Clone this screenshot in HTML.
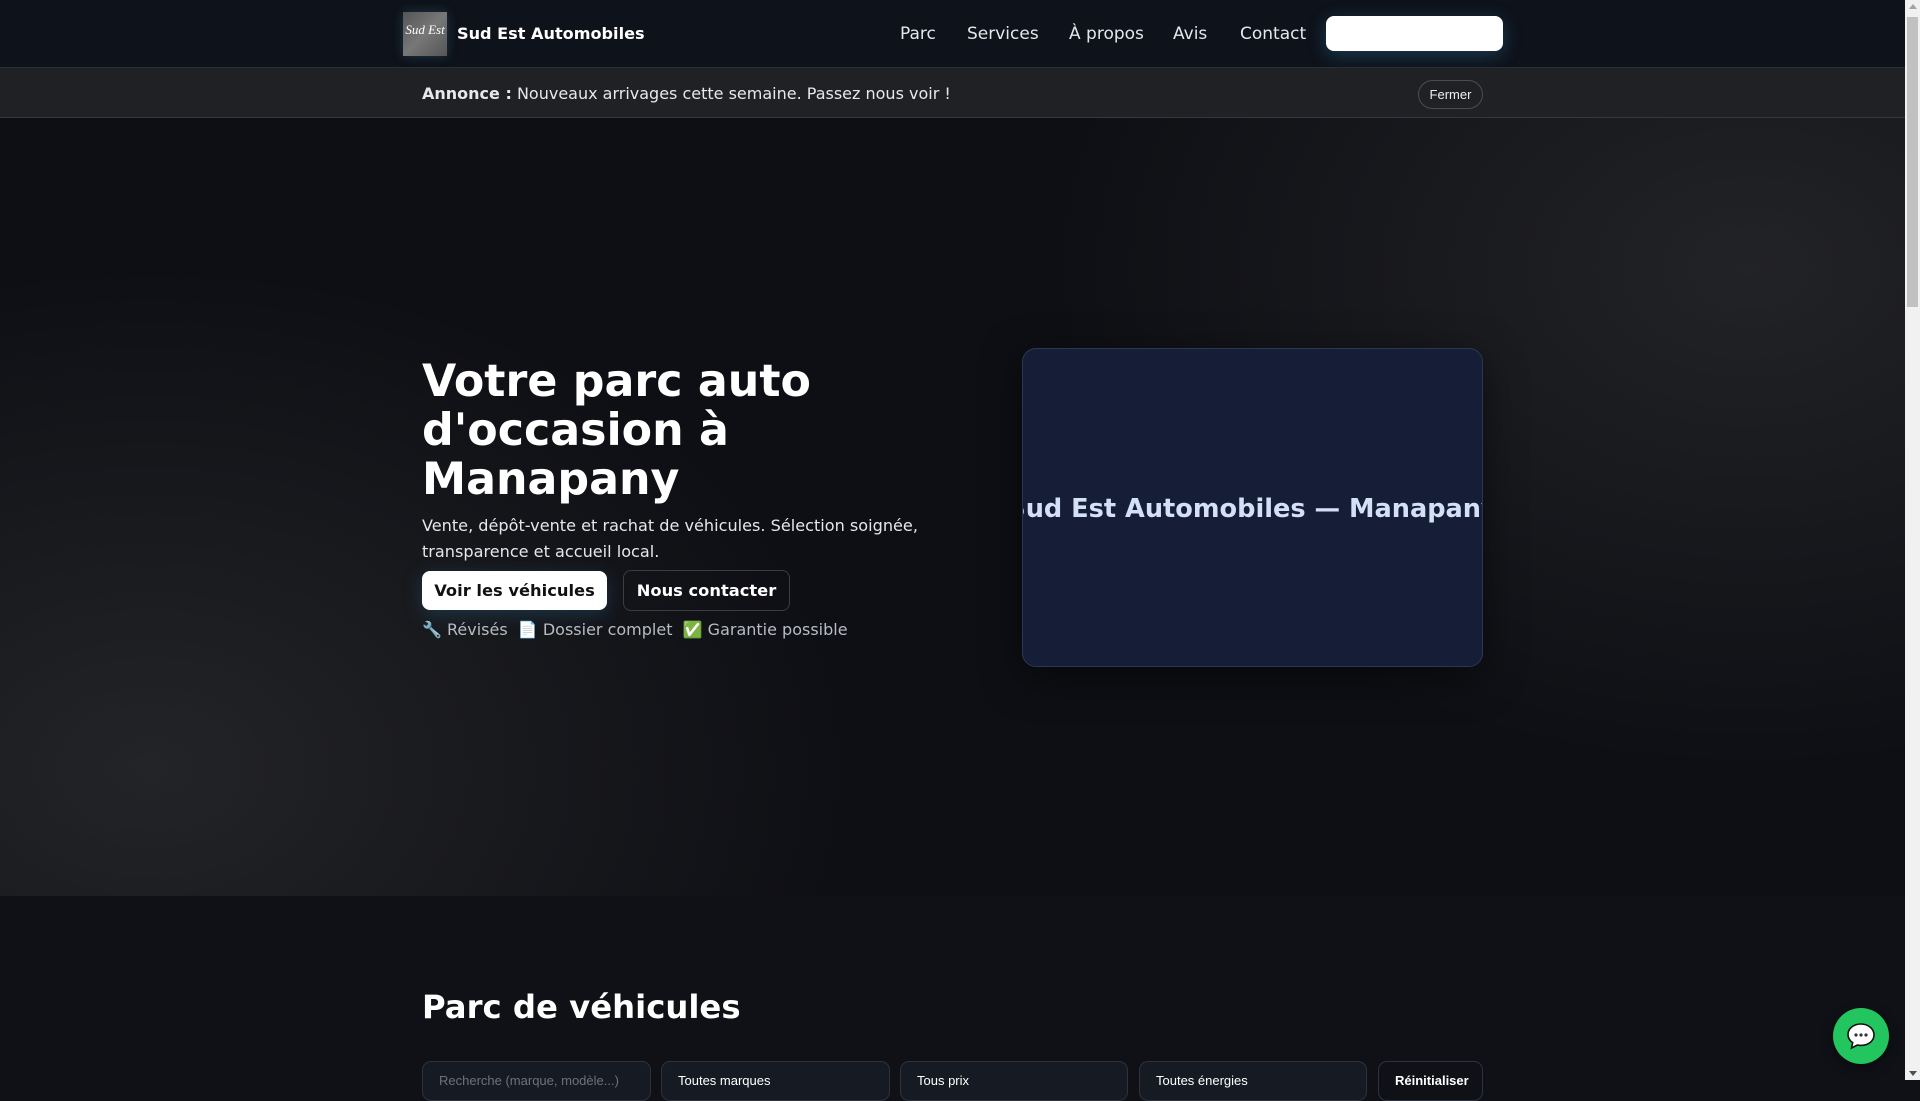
<!DOCTYPE html>
<html><head><meta charset="utf-8"><style>
*{box-sizing:border-box;margin:0;padding:0}
html,body{width:1920px;height:1080px;overflow:hidden;background:#0f1116;font-family:"DejaVu Sans","Liberation Sans",sans-serif;color:#fff}
.sb{position:absolute;right:0;top:0;width:15px;height:1080px;background:#f1f1f1}
.sb .th{position:absolute;left:2px;right:2px;top:17px;height:290px;background:#c1c1c1}
.sb .up{position:absolute;top:4px;left:4px;border:4px solid transparent;border-bottom:5px solid #a3a3a3;border-top:0}
.sb .dn{position:absolute;bottom:4px;left:4px;border:4px solid transparent;border-top:5px solid #505050;border-bottom:0}
.page{position:absolute;left:0;top:0;width:1905px;height:1080px}
nav{height:67px;background:#0e121a;position:relative}
.logo{position:absolute;left:403px;top:12px;width:44px;height:44px;background:linear-gradient(135deg,#555,#777 50%,#555);box-shadow:0 0 10px rgba(60,130,160,.35);color:#fff;font-family:"Liberation Serif",serif;font-style:italic;font-size:13px;text-align:center;line-height:36px}
.title{position:absolute;left:457px;top:24px;font-weight:bold;font-size:16.1px}
.links a{position:absolute;top:24px;font-size:17px;color:#e5e7eb;text-decoration:none}
.wbtn{position:absolute;left:1326px;top:16px;width:177px;height:35px;background:#fff;border-radius:8px;box-shadow:0 4px 18px rgba(40,110,150,.45)}
.ann{height:51px;background:#202125;border-top:1px solid #2b2e33;border-bottom:1px solid #34373c;position:relative}
.ann p{position:absolute;left:422px;top:16px;font-size:16px;color:#e8e8e8}
.ferm{position:absolute;left:1418px;top:12px;width:65px;height:29px;border:1px solid #4a4c52;border-radius:15px;font-family:"Liberation Sans",sans-serif;font-size:13px;text-align:center;line-height:27px;color:#eee}
.hero{position:absolute;top:118px;left:0;width:1905px;height:778px;background:radial-gradient(ellipse 700px 500px at 150px 650px,#232427,transparent),radial-gradient(ellipse 700px 500px at 1750px 150px,#222326,transparent),#0e0f14}
h1{position:absolute;left:422px;top:239px;font-size:44.3px;line-height:49px;font-weight:bold}
.para{position:absolute;left:422px;top:395px;font-size:16.1px;line-height:26px;color:#e5e7eb;width:540px}
.b1{position:absolute;left:422px;top:453px;width:185px;height:39px;background:#fff;color:#111;border-radius:8px;font-weight:bold;font-size:16.3px;text-align:center;line-height:39px;box-shadow:0 4px 18px rgba(40,110,150,.35)}
.b2{position:absolute;left:623px;top:452px;width:167px;height:41px;border:1px solid #3a3d44;color:#fff;border-radius:8px;font-weight:bold;font-size:16.3px;text-align:center;line-height:39px}
.badges{position:absolute;left:422px;top:502px;font-size:16px;color:#b8bcc4}
.card{position:absolute;left:1022px;top:230px;width:461px;height:319px;background:#151e36;border:1px solid #2c3852;border-radius:14px;overflow:hidden;box-shadow:0 10px 40px rgba(0,0,0,.5)}
.card span{position:absolute;left:50%;transform:translateX(-50%);top:145px;white-space:nowrap;font-weight:bold;font-size:25.6px;color:#d4e0f5}
h2{position:absolute;left:422px;top:988px;font-size:32.3px;font-weight:bold}
.f{position:absolute;top:1061px;height:40px;background:#161a22;border:1px solid #2d323c;border-radius:9px;font-family:"Liberation Sans",sans-serif;font-size:13px;color:#fff;padding:11px 16px}
.chat{position:absolute;left:1833px;top:1008px;width:56px;height:56px;border-radius:50%;background:#22c55e;box-shadow:0 4px 12px rgba(0,0,0,.4)}
</style></head><body>
<div class="page">
<nav>
<div class="logo">Sud Est</div>
<div class="title">Sud Est Automobiles</div>
<div class="links"><a style="left:900px">Parc</a><a style="left:967px">Services</a><a style="left:1069px">À propos</a><a style="left:1173px">Avis</a><a style="left:1240px">Contact</a></div>
<div class="wbtn"></div>
</nav>
<div class="ann"><p><b>Annonce :</b> Nouveaux arrivages cette semaine. Passez nous voir !</p><div class="ferm">Fermer</div></div>
<div class="hero">
<h1>Votre parc auto<br>d'occasion à<br>Manapany</h1>
<div class="para">Vente, dépôt-vente et rachat de véhicules. Sélection soignée, transparence et accueil local.</div>
<div class="b1">Voir les véhicules</div>
<div class="b2">Nous contacter</div>
<div class="badges">🔧 Révisés &nbsp;📄 Dossier complet &nbsp;✅ Garantie possible</div>
<div class="card"><span>Sud Est Automobiles — Manapany</span></div>
</div>
<h2>Parc de véhicules</h2>
<div class="f" style="left:422px;width:229px;color:#6b7280">Recherche (marque, modèle...)</div>
<div class="f" style="left:661px;width:229px">Toutes marques</div>
<div class="f" style="left:900px;width:228px">Tous prix</div>
<div class="f" style="left:1139px;width:228px">Toutes énergies</div>
<div class="f" style="left:1378px;width:105px;background:#0f1116;font-weight:bold">Réinitialiser</div>
<div class="chat"><svg width="56" height="56" viewBox="0 0 56 56"><path d="M28 16c-7.5 0-13 4.6-13 10.5 0 3.4 1.8 6.3 4.7 8.2L18.5 40l6-3c1.1.3 2.3.4 3.5.4 7.5 0 13-4.6 13-10.5S35.5 16 28 16z" fill="#fff" stroke="#111" stroke-width="1.6"/><circle cx="23" cy="27" r="1.6" fill="#333"/><circle cx="28" cy="27" r="1.6" fill="#333"/><circle cx="33" cy="27" r="1.6" fill="#333"/></svg></div>
</div>
<div class="sb"><div class="up"></div><div class="th"></div><div class="dn"></div></div>
</body></html>
